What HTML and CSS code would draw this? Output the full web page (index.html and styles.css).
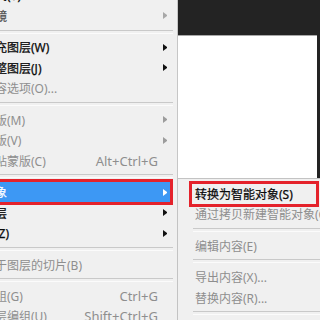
FILE: index.html
```html
<!DOCTYPE html>
<html lang="zh-CN">
<head>
<meta charset="utf-8">
<title>智能对象菜单</title>
<link rel="stylesheet" href="styles.css">
</head>
<body>
<div class="screen">
  <div class="menu">
    <div class="item"><span class="label">图层样式(Y)</span><span class="arrow on"></span></div>
    <div class="item dim"><span class="label">智能滤镜</span><span class="arrow on"></span></div>
    <div class="sep"></div>
    <div class="item"><span class="label">新建填充图层(W)</span><span class="arrow on"></span></div>
    <div class="item"><span class="label">新建调整图层(J)</span><span class="arrow on"></span></div>
    <div class="item off"><span class="label">图层内容选项(O)...</span><span class="arrow"></span></div>
    <div class="sep"></div>
    <div class="item off"><span class="label">图层蒙版(M)</span><span class="arrow on"></span></div>
    <div class="item off"><span class="label">矢量蒙版(V)</span><span class="arrow on"></span></div>
    <div class="item off"><span class="label">创建剪贴蒙版(C)</span><span class="key">Alt+Ctrl+G</span><span class="arrow"></span></div>
    <div class="sep"></div>
    <div class="item active marked"><span class="label">智能对象</span><span class="arrow on"></span></div>
    <div class="item"><span class="label">视频图层</span><span class="arrow on"></span></div>
    <div class="item"><span class="label">栅格化(Z)</span><span class="arrow on"></span></div>
    <div class="sep"></div>
    <div class="item off"><span class="label">新建基于图层的切片(B)</span><span class="arrow"></span></div>
    <div class="sep"></div>
    <div class="item off"><span class="label">图层编组(G)</span><span class="key">Ctrl+G</span><span class="arrow"></span></div>
    <div class="item off"><span class="label">取消图层编组(U)</span><span class="key">Shift+Ctrl+G</span><span class="arrow"></span></div>
  </div>
  <div class="workspace">
    <div class="canvas"></div>
    <div class="submenu">
      <div class="item marked"><span class="label">转换为智能对象(S)</span></div>
      <div class="item off"><span class="label">通过拷贝新建智能对象(C)</span></div>
      <div class="sep"></div>
      <div class="item off"><span class="label">编辑内容(E)</span></div>
      <div class="sep"></div>
      <div class="item off"><span class="label">导出内容(X)...</span></div>
      <div class="item off"><span class="label">替换内容(R)...</span></div>
      <div class="sep"></div>
    </div>
  </div>
</div>
</body>
</html>
```
FILE: styles.css
```css
* { box-sizing: border-box; }
html, body { margin: 0; padding: 0; }
body {
  width: 320px;
  height: 320px;
  overflow: hidden;
  background: #232323;
  font-family: "Noto Sans", "Noto Sans CJK SC", sans-serif;
  font-size: 12px;
}
.screen {
  display: flex;
  width: 320px;
  height: 320px;
  overflow: hidden;
}
.menu {
  flex: 0 0 238px;
  margin-left: -60px;
  margin-top: -15px;
  padding: 0 7px 0 3px;
  background: #f0f0f0;
  border-right: 1px solid #c6c6c6;
}
.item {
  display: flex;
  align-items: center;
  height: 20.6px;
  padding: 0 3px 0 16px;
  white-space: nowrap;
  color: #0a0a0a;
  -webkit-text-stroke: 0.25px currentColor;
}
.label { flex: 1; }
.key { font-size: 13px; }
.arrow {
  flex: none;
  width: 4px;
  height: 7px;
  margin-left: 5px;
}
.arrow.on {
  border-left: 4px solid #111;
  border-top: 3.5px solid transparent;
  border-bottom: 3.5px solid transparent;
}
.off { color: #8e8e8e; -webkit-text-stroke: 0; }
.off .arrow.on { border-left-color: #9c9c9c; }
.dim { color: #555; }
.dim .arrow.on { border-left-color: #a8a8a8; }
.active { background: #3d98f4; color: #fff; }
.active .arrow.on { border-left-color: #fff; }
.marked { outline: 3px solid #e4222b; }
.sep {
  height: 10.7px;
  display: flex;
  align-items: center;
}
.sep::before {
  content: "";
  flex: 1;
  height: 2px;
  border-top: 1px solid #c9c9c9;
  border-bottom: 1px solid #fbfbfb;
}
.menu .sep { margin-right: -3px; }
.workspace {
  flex: 1;
  position: relative;
  background: #232323;
}
.canvas {
  margin-top: 35px;
  margin-right: 3px;
  height: 143px;
  background: #fff;
  border-top: 1px solid #a8a8a8;
}
.submenu {
  position: absolute;
  top: 178px;
  left: -1px;
  width: 148px;
  height: 150px;
  padding-top: 4.5px;
  background: #f0f0f0;
  border-top: 1px solid #c3c3c3;
  border-left: 1px solid #c3c3c3;
}
.submenu .item {
  margin: 0 9.5px 0 14px;
  padding-left: 3px;
}
.submenu .sep { margin-left: 15px; }
```
